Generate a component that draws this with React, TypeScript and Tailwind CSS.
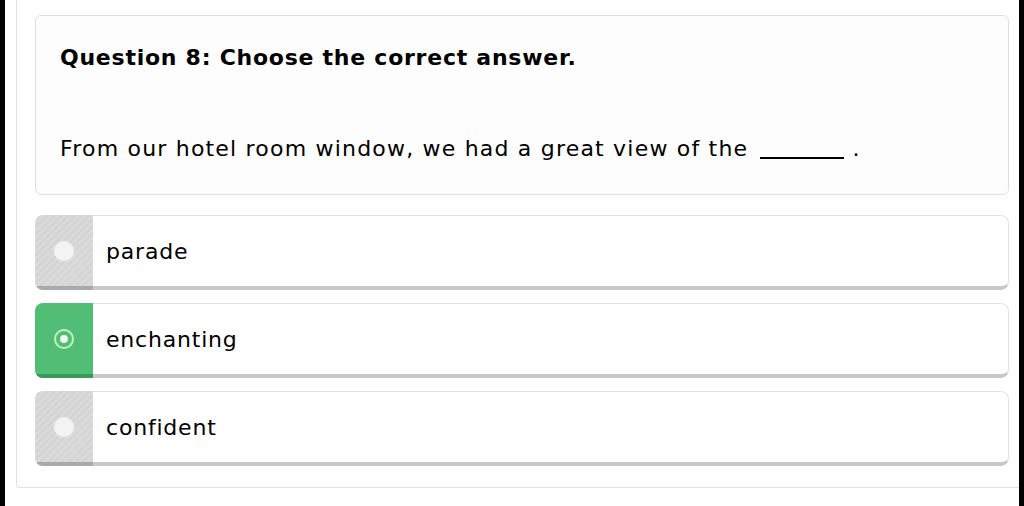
const options = [
  { label: "parade", selected: false },
  { label: "enchanting", selected: true },
  { label: "confident", selected: false },
];

const font = "font-['Comic_Sans_MS','DejaVu_Sans',sans-serif]";

function Option({ label, selected }: { label: string; selected: boolean }) {
  return (
    <div className="flex h-[75px] overflow-hidden rounded-[8px]">
      <div
        className={
          selected
            ? "flex w-[58px] items-center justify-center border-b-4 border-b-[#3a9b58] bg-[#52bd75]"
            : "flex w-[58px] items-center justify-center border-b-4 border-b-[#a9a9a9] bg-[repeating-linear-gradient(135deg,#dadada_0,#dadada_3px,#d3d3d3_3px,#d3d3d3_5px)]"
        }
      >
        {selected ? (
          <div className="flex h-[20px] w-[20px] items-center justify-center rounded-full border-2 border-[#c8efc2]">
            <div className="h-[8px] w-[8px] rounded-full bg-[#eaffe6]" />
          </div>
        ) : (
          <div className="h-[20px] w-[20px] rounded-full bg-[#f3f3f3]" />
        )}
      </div>
      <div className="flex flex-1 items-center rounded-r-[8px] border-t border-r border-[#e0e0e0] border-b-4 border-b-[#c9c9c9] bg-white pl-[13px]">
        <span className="text-[22px] tracking-[0.8px] text-black">{label}</span>
      </div>
    </div>
  );
}

export default function App() {
  return (
    <div className={`h-[506px] bg-black px-[5px] ${font}`}>
      <div className="h-full bg-white pl-[11px]">
        <div className="h-[488px] rounded-bl-[4px] border-b border-l border-[#e2e2e2] pl-[18px] pr-[10px] pt-[15px]">
          <div className="h-[180px] rounded-[6px] border border-[#dedede] bg-[#fdfdfd] pl-[24px] pt-[27px]">
            <h2 className="text-[22px] font-bold leading-[30px] tracking-[0.75px] text-black">
              Question 8: Choose the correct answer.
            </h2>
            <p className="mt-[61px] text-[22px] leading-[30px] tracking-[1.2px] text-black">
              From our hotel room window, we had a great view of the{" "}
              <span className="ml-[4px] inline-block w-[84px] border-b-2 border-black align-[-3px]" />
              <span className="ml-[8px]">.</span>
            </p>
          </div>
          <div className="mt-[20px] flex flex-col gap-[13px]">
            {options.map((o) => (
              <Option key={o.label} label={o.label} selected={o.selected} />
            ))}
          </div>
        </div>
      </div>
    </div>
  );
}
